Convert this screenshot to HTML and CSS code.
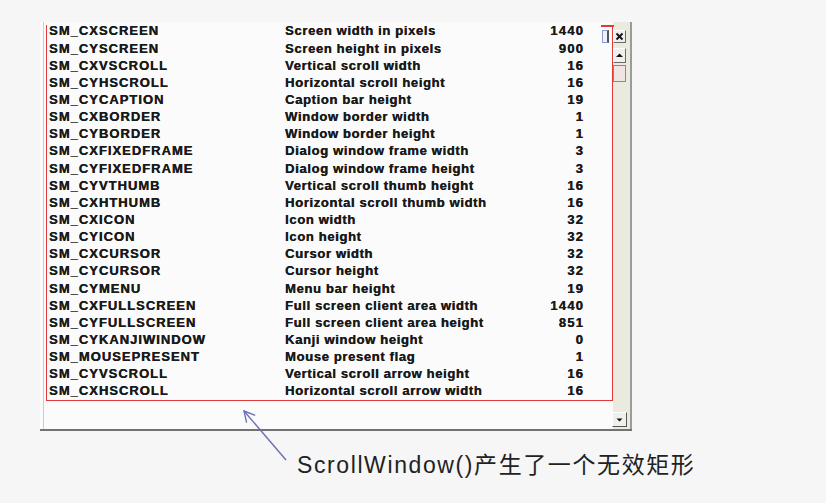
FILE: index.html
```html
<!DOCTYPE html>
<html lang="zh">
<head>
<meta charset="utf-8">
<title>ScrollWindow</title>
<link rel="stylesheet" href="styles.css">
</head>
<body>
<div class="page">
  <div class="window">
    <div class="client">
      <div class="table">
        <span class="name">SM_CXSCREEN</span><span class="desc">Screen width in pixels</span><span class="val">1440</span>
        <span class="name">SM_CYSCREEN</span><span class="desc">Screen height in pixels</span><span class="val">900</span>
        <span class="name">SM_CXVSCROLL</span><span class="desc">Vertical scroll width</span><span class="val">16</span>
        <span class="name">SM_CYHSCROLL</span><span class="desc">Horizontal scroll height</span><span class="val">16</span>
        <span class="name">SM_CYCAPTION</span><span class="desc">Caption bar height</span><span class="val">19</span>
        <span class="name">SM_CXBORDER</span><span class="desc">Window border width</span><span class="val">1</span>
        <span class="name">SM_CYBORDER</span><span class="desc">Window border height</span><span class="val">1</span>
        <span class="name">SM_CXFIXEDFRAME</span><span class="desc">Dialog window frame width</span><span class="val">3</span>
        <span class="name">SM_CYFIXEDFRAME</span><span class="desc">Dialog window frame height</span><span class="val">3</span>
        <span class="name">SM_CYVTHUMB</span><span class="desc">Vertical scroll thumb height</span><span class="val">16</span>
        <span class="name">SM_CXHTHUMB</span><span class="desc">Horizontal scroll thumb width</span><span class="val">16</span>
        <span class="name">SM_CXICON</span><span class="desc">Icon width</span><span class="val">32</span>
        <span class="name">SM_CYICON</span><span class="desc">Icon height</span><span class="val">32</span>
        <span class="name">SM_CXCURSOR</span><span class="desc">Cursor width</span><span class="val">32</span>
        <span class="name">SM_CYCURSOR</span><span class="desc">Cursor height</span><span class="val">32</span>
        <span class="name">SM_CYMENU</span><span class="desc">Menu bar height</span><span class="val">19</span>
        <span class="name">SM_CXFULLSCREEN</span><span class="desc">Full screen client area width</span><span class="val">1440</span>
        <span class="name">SM_CYFULLSCREEN</span><span class="desc">Full screen client area height</span><span class="val">851</span>
        <span class="name">SM_CYKANJIWINDOW</span><span class="desc">Kanji window height</span><span class="val">0</span>
        <span class="name">SM_MOUSEPRESENT</span><span class="desc">Mouse present flag</span><span class="val">1</span>
        <span class="name">SM_CYVSCROLL</span><span class="desc">Vertical scroll arrow height</span><span class="val">16</span>
        <span class="name">SM_CXHSCROLL</span><span class="desc">Horizontal scroll arrow width</span><span class="val">16</span>
      </div>
    </div>
    <div class="scrollbar">
      <div class="btn close">
        <svg width="11" height="11" viewBox="0 0 11 11"><path d="M2.5 2.5 L8.5 8.5 M8.5 2.5 L2.5 8.5" stroke="#111" stroke-width="1.8"/></svg>
      </div>
      <div class="btn up">
        <svg width="11" height="13" viewBox="0 0 11 13"><path d="M2 8 L5.5 4.5 L9 8 Z" fill="#111"/></svg>
      </div>
      <div class="btn thumb"></div>
      <div class="track"></div>
      <div class="btn down">
        <svg width="13" height="13" viewBox="0 0 13 13"><path d="M3.5 5.5 L9.5 5.5 L6.5 8.5 Z" fill="#111"/></svg>
      </div>
    </div>
    <div class="partial-btn"></div>
    <div class="invalid-rect"></div>
  </div>
  <div class="note">ScrollWindow()产生了一个无效矩形</div>
  <svg class="arrow" width="60" height="62" viewBox="0 0 60 62">
    <path d="M8 7 L50 56" stroke="#6b6fb8" stroke-width="1.4" fill="none"/>
    <path d="M10.6 18.7 L8 7 L19.2 11.4" stroke="#6b6fb8" stroke-width="1.4" fill="none"/>
  </svg>
</div>
</body>
</html>
```

FILE: styles.css
```css
body {
  margin: 0;
  background: #f6f6f6;
  font-family: "Liberation Sans", Arial, sans-serif;
}

.page {
  position: relative;
  width: 826px;
  height: 503px;
  padding-top: 22px;
  box-sizing: border-box;
}

.window {
  position: relative;
  margin-left: 40px;
  width: 592px;
  height: 409px;
  box-sizing: border-box;
  border-bottom: 2px solid #727272;
  display: flex;
  background: #fbfbfb;
}

.client {
  flex: 1;
  margin-left: 3px;
  border-left: 1px solid #cdcdcd;
  padding: 0.4px 28px 0 5px;
}

.table {
  display: grid;
  grid-template-columns: 236px 1fr auto;
  font-size: 13px;
  font-weight: bold;
  line-height: 17.14px;
  color: #1a1a1a;
  text-shadow: 0.35px 0 0 #1a1a1a;
}

.name { letter-spacing: 1px; }
.desc { letter-spacing: 0.65px; }
.val { text-align: right; letter-spacing: 1.2px; }

.scrollbar {
  width: 20px;
  box-sizing: border-box;
  display: flex;
  flex-direction: column;
  align-items: flex-start;
  padding-top: 8px;
  background: linear-gradient(to right, #fbfbfb 0 1px, #ebeadf 1px);
  border-right: 2px solid #9b9b9b;
}

.btn {
  box-sizing: border-box;
  border: 1px solid;
  border-color: #ffffff #6a6a6a #6a6a6a #ffffff;
  background: #efefec;
  display: flex;
  align-items: center;
  justify-content: center;
}

.close {
  width: 13px;
  height: 13px;
  margin-left: 1px;
}

.up {
  width: 13px;
  height: 15px;
  margin-left: 1px;
  margin-top: 5px;
}

.thumb {
  width: 13px;
  height: 17px;
  margin-left: 1px;
  margin-top: 2px;
  background: #f1e4e4;
  border-color: #8a8a8a;
}

.track { flex: 1; }

.down {
  width: 15px;
  height: 15px;
  margin-bottom: 2px;
  border-color: #ffffff #555 #555 #ffffff;
}

.partial-btn {
  position: absolute;
  left: 562px;
  top: 8px;
  width: 7px;
  height: 13px;
  box-sizing: border-box;
  border: 1px solid #8e9bd2;
  border-right: 2px solid #555;
  background: #eef0fa;
}

.invalid-rect {
  position: absolute;
  left: 6px;
  top: 3px;
  width: 567px;
  height: 376px;
  box-sizing: border-box;
  border: 1.5px solid #e23a3a;
  border-top: none;
}

.invalid-rect::before {
  content: "";
  position: absolute;
  right: -1.5px;
  top: 0;
  width: 13px;
  height: 1.5px;
  background: #e23a3a;
}

.note {
  margin-top: 19px;
  padding-left: 297px;
  font-family: "Liberation Sans", "Noto Sans CJK SC", sans-serif;
  font-size: 23px;
  line-height: 30px;
  letter-spacing: 1.6px;
  color: #222;
}

.arrow {
  position: absolute;
  left: 236px;
  top: 404px;
}
```
